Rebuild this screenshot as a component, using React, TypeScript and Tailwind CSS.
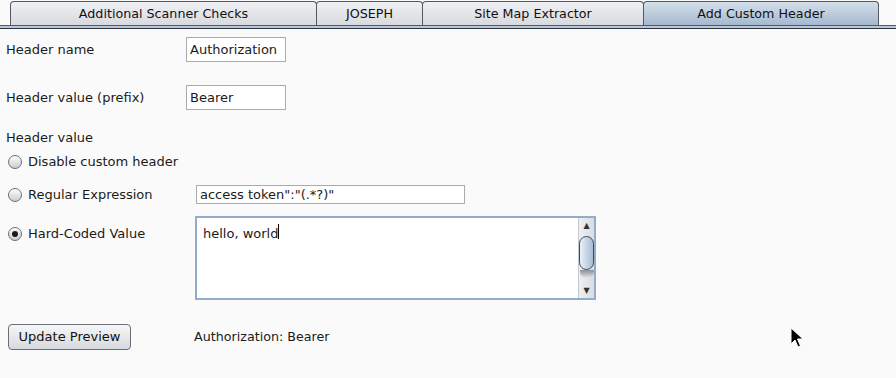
import React from 'react';

const TABS = [
    { label: 'Additional Scanner Checks', width: 'w-[307px]', active: false },
    { label: 'JOSEPH', width: 'w-[107px]', active: false },
    { label: 'Site Map Extractor', width: 'w-[222px]', active: false },
    { label: 'Add Custom Header', width: 'w-[236px]', active: true },
];

const Radio: React.FC<{ checked?: boolean }> = ({ checked }) => (
    <span className="w-[14px] h-[14px] rounded-full border border-[#6b6f75] bg-gradient-to-b from-[#ffffff] to-[#c9ccd1] flex items-center justify-center shrink-0">
        {checked && <span className="w-[6px] h-[6px] rounded-full bg-[#1a1a1a]" />}
    </span>
);

const App: React.FC = () => {
    return (
        <div className="relative w-[896px] h-[378px] bg-[#fafafa] text-[#1a1a1a] text-[13px] overflow-hidden select-none" style={{ fontFamily: '"DejaVu Sans", Verdana, sans-serif' }}>
            {/* Tab strip */}
            <div className="h-[25px] flex items-end pl-[10px] bg-[#fafafa]">
                {TABS.map(tab => (
                    <div
                        key={tab.label}
                        className={`${tab.width} h-[24px] -ml-px first:ml-0 flex items-center justify-center rounded-t-[4px] border border-b-0 border-[#55585e] text-[12.7px] text-[#111]
                            ${tab.active ? 'bg-gradient-to-b from-[#d4dfea] to-[#a6b9cf]' : 'bg-gradient-to-b from-[#eef0f3] to-[#d8dadf]'}`}
                    >
                        {tab.label}
                    </div>
                ))}
            </div>
            <div className="h-[3px] bg-[#b9c8d9] border-t border-[#55585e]" />
            <div className="h-px bg-[#2d3440]" />

            {/* Form */}
            <div className="flex flex-col pl-[6px] pt-[8px]">
                <div className="flex items-center h-[25px]">
                    <span className="w-[180px] pt-px">Header name</span>
                    <div className="w-[100px] h-[25px] border border-[#a9abb0] bg-white flex items-center px-[3px]">Authorization</div>
                </div>
                <div className="flex items-center h-[25px] mt-[23px]">
                    <span className="w-[180px]">Header value (prefix)</span>
                    <div className="w-[100px] h-[25px] border border-[#a9abb0] bg-white flex items-center px-[3px]">Bearer</div>
                </div>

                <div className="mt-[20px] h-[16px] flex items-center">Header value</div>

                <div className="flex items-center h-[16px] mt-[8px] ml-[2px] gap-[6px]">
                    <Radio />
                    <span>Disable custom header</span>
                </div>

                <div className="flex items-center h-[19px] mt-[15px] ml-[2px]">
                    <div className="w-[188px] flex items-center gap-[6px]">
                        <Radio />
                        <span>Regular Expression</span>
                    </div>
                    <div className="w-[269px] h-[19px] border border-[#a9abb0] bg-white flex items-center px-[3px]">access token":"(.*?)"</div>
                </div>

                <div className="flex items-start mt-[12px] ml-[2px]">
                    <div className="w-[187px] h-[35px] flex items-center gap-[6px]">
                        <Radio checked />
                        <span>Hard-Coded Value</span>
                    </div>
                    <div className="w-[401px] h-[84px] border-2 border-[#93acc9] bg-white flex">
                        <div className="flex-1 px-[6px] pt-[6px] flex items-start">
                            <span>hello, world</span>
                            <span className="w-px h-[15px] bg-black" />
                        </div>
                        <div className="w-[16px] h-full bg-gradient-to-r from-[#eef0f3] to-[#d9dce1] border-l border-[#c4c7cc] flex flex-col items-center">
                            <span className="h-[16px] flex items-center text-[8px] text-[#333]">▲</span>
                            <div className="w-[15px] h-[34px] mt-[2px] rounded-[8px] border border-[#3c4a5a] bg-gradient-to-r from-[#eaf1f8] via-[#c7d6e6] to-[#a9bdd2]" />
                            <div className="w-[14px] h-[8px] rounded-b-[6px] bg-gradient-to-b from-[#8d9096] to-[#e3e5e8]" />
                            <div className="flex-1" />
                            <span className="h-[14px] flex items-center text-[8px] text-[#333]">▼</span>
                        </div>
                    </div>
                </div>

                <div className="flex items-center mt-[24px] ml-[2px]">
                    <button className="w-[123px] h-[26px] rounded-[4px] border border-[#6b6f75] bg-gradient-to-b from-[#f6f7f8] to-[#d6d9de] text-[13px] text-[#111]">Update Preview</button>
                    <span className="ml-[63px] text-[12.7px]">Authorization: Bearer</span>
                </div>
            </div>

            {/* mouse pointer */}
            <svg className="absolute left-[790px] top-[327px]" width="16" height="22" viewBox="0 0 16 22">
                <path d="M1 1 L1 17 L5 13 L8 20 L10.5 19 L7.5 12 L13 12 Z" fill="#000" stroke="#fff" strokeWidth="1" />
            </svg>
        </div>
    );
};

export default App;
